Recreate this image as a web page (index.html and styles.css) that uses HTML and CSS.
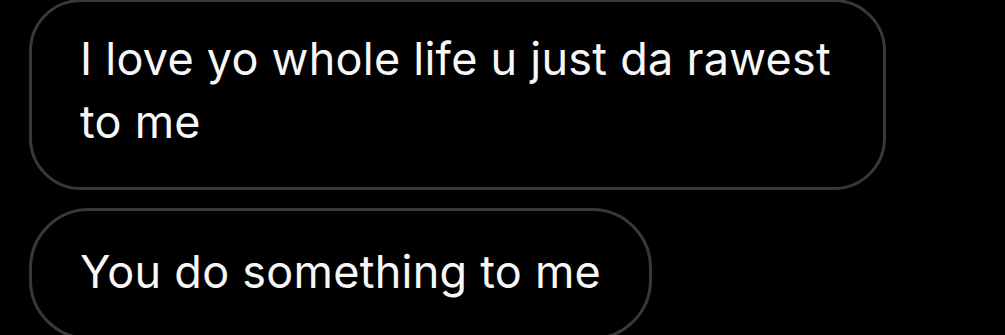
FILE: index.html
```html
<!DOCTYPE html>
<html lang="en">
<head>
<meta charset="utf-8">
<link rel="stylesheet" href="styles.css">
</head>
<body>
  <main class="thread">
    <div class="bubble">I love yo whole life u just da rawest to me</div>
    <div class="bubble bubble-short">You do something to me</div>
  </main>
</body>
</html>
```
FILE: styles.css
```css
html, body {
  margin: 0;
  padding: 0;
  background: #000;
  overflow: hidden;
}
body {
  width: 1005px;
  height: 335px;
  font-family: Inter, "Noto Sans", "Liberation Sans", sans-serif;
}
.thread {
  display: flex;
  flex-direction: column;
  align-items: flex-start;
  gap: 18px;
  padding-left: 29px;
  margin-top: -1px;
}
.bubble {
  box-sizing: border-box;
  max-width: 857px;
  border: 3px solid #383838;
  border-radius: 52px;
  padding: 25px 48px 34px 48px;
  color: #f7f7f7;
  font-size: 45px;
  line-height: 63px;
  letter-spacing: 0.25px;
}
.bubble-short {
  padding-top: 29px;
  border-radius: 60px;
}
```
